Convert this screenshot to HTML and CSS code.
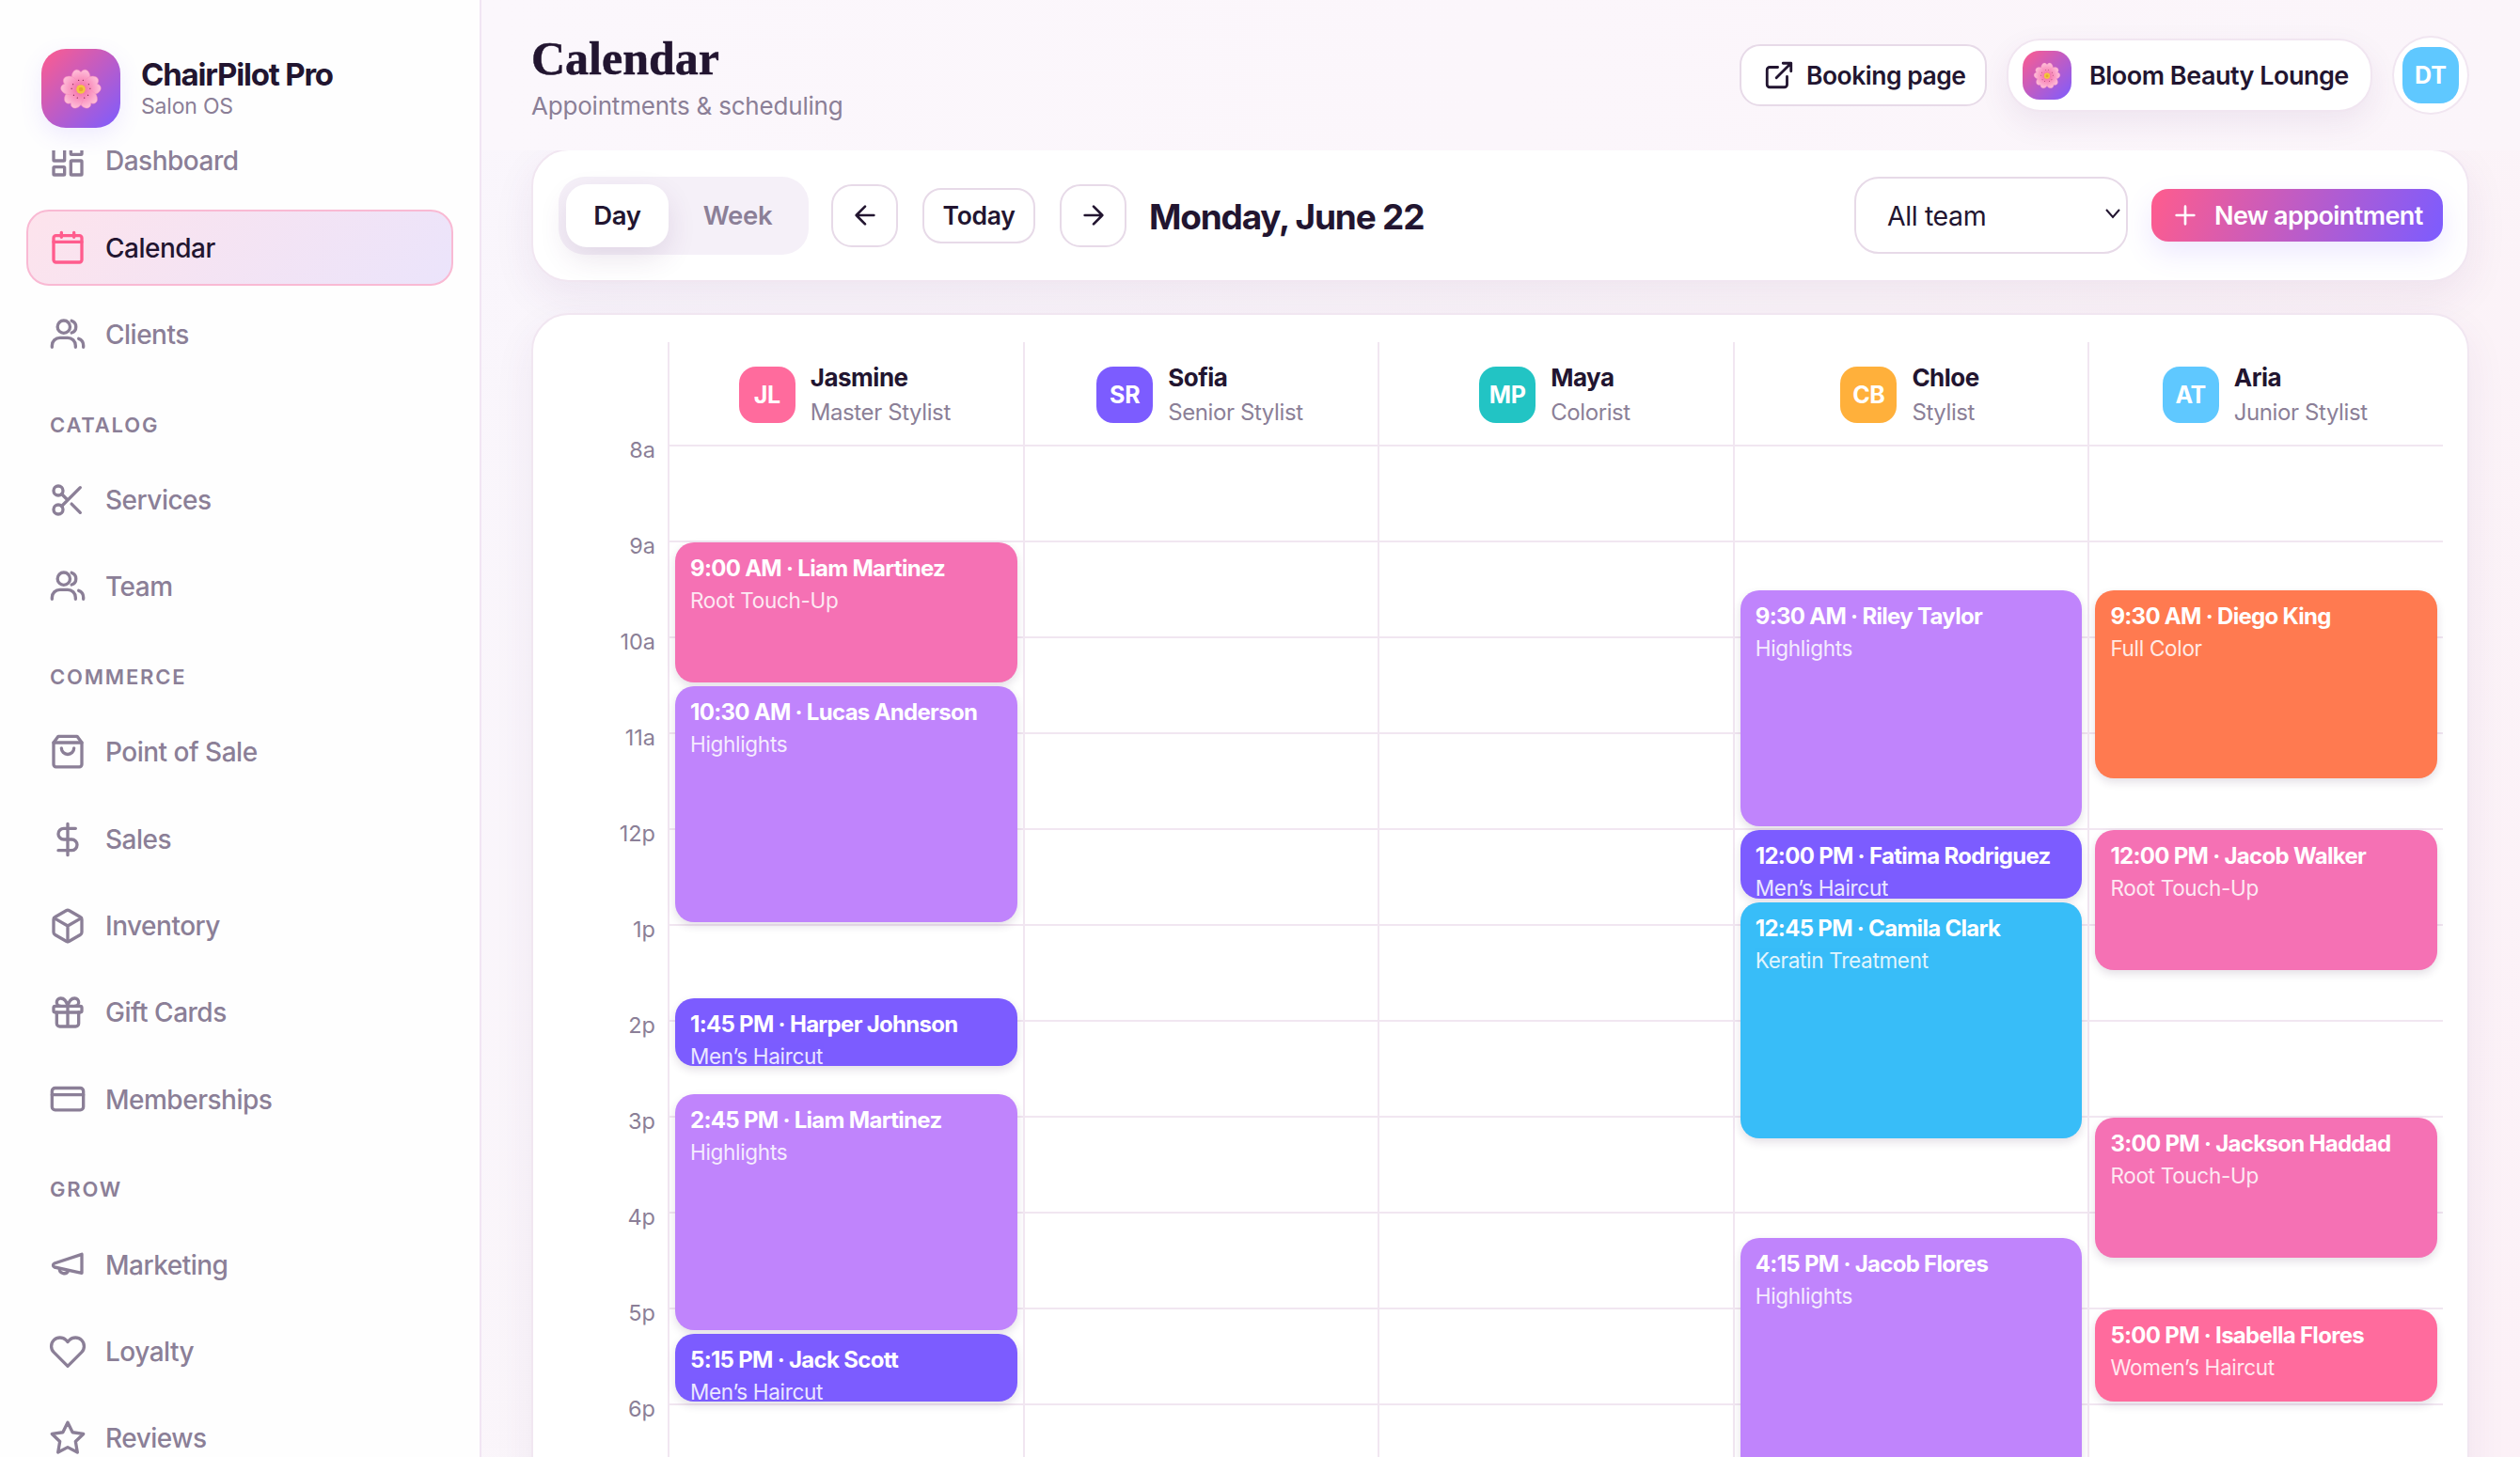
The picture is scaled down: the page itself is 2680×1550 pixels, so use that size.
FILE: index.html

```html
<!DOCTYPE html>
<html lang="en">
<head>
  <meta charset="UTF-8">
  <title>ChairPilot Pro - Calendar</title>
  <link rel="stylesheet" href="styles.css">
</head>
<body>
  <svg class="defs" width="0" height="0">
    <defs>
      <radialGradient id="petal-fill" gradientUnits="userSpaceOnUse" cx="24" cy="25" r="23">
        <stop offset="0" stop-color="#f2619e"/>
        <stop offset="0.45" stop-color="#f98fbd"/>
        <stop offset="1" stop-color="#ffc4dc"/>
      </radialGradient>
      <path id="petal" d="M24 25C15 20 11 11 16 5c2-2.400 6-2.400 8 1 2-3.400 6-3.400 8-1 5 6 1 15-8 20Z"/>
      <g id="petal-dots">
        <circle cx="21.500" cy="15" r="0.700"/>
        <circle cx="26.500" cy="15" r="0.700"/>
      </g>
    </defs>
    <symbol id="flower" viewBox="0 0 48 48">
      <g fill="url(#petal-fill)" stroke="#f88dbb" stroke-width="0.500">
        <use href="#petal"/>
        <use href="#petal" transform="rotate(72 24 25)"/>
        <use href="#petal" transform="rotate(144 24 25)"/>
        <use href="#petal" transform="rotate(216 24 25)"/>
        <use href="#petal" transform="rotate(288 24 25)"/>
      </g>
      <g fill="#8f2f55">
        <use href="#petal-dots"/>
        <use href="#petal-dots" transform="rotate(72 24 25)"/>
        <use href="#petal-dots" transform="rotate(144 24 25)"/>
        <use href="#petal-dots" transform="rotate(216 24 25)"/>
        <use href="#petal-dots" transform="rotate(288 24 25)"/>
      </g>
      <circle cx="24" cy="25" r="5" fill="#f3c63f"/>
      <circle cx="24" cy="25" r="2.400" fill="#e5a92e"/>
    </symbol>
    <symbol id="ic-users" viewBox="0 0 24 24">
      <circle cx="9.500" cy="7" r="4"/>
      <path d="M14.500 3.200a4 4 0 0 1 0 7.600"/>
      <path d="M2 20v-1a5 5 0 0 1 5-5h5a5 5 0 0 1 5 5v1"/>
      <path d="M19 14.600a4.500 4.500 0 0 1 3 4.200V20"/>
    </symbol>
  </svg>

  <div class="app">
    <aside class="sidebar">
      <div class="brand">
        <div class="brand-logo"><svg class="flower"><use href="#flower"/></svg></div>
        <div class="brand-text">
          <div class="brand-name">ChairPilot Pro</div>
          <div class="brand-sub">Salon OS</div>
        </div>
      </div>

      <nav class="nav">
        <div class="nav-scroll">
          <div class="nav-group">
            <a class="nav-item">
              <svg class="icon" viewBox="0 0 24 24"><rect x="3" y="3" width="7" height="9" rx="0.500"/><rect x="14" y="3" width="7" height="5" rx="0.500"/><rect x="14" y="12" width="7" height="9" rx="0.500"/><rect x="3" y="16" width="7" height="5" rx="0.500"/></svg>
              Dashboard
            </a>
            <a class="nav-item active">
              <svg class="icon" viewBox="0 0 24 24"><rect x="3" y="4" width="18" height="17" rx="1.500"/><path d="M8 2v3M16 2v3M3 8h18"/></svg>
              Calendar
            </a>
            <a class="nav-item">
              <svg class="icon"><use href="#ic-users"/></svg>
              Clients
            </a>
          </div>

          <div class="nav-label">CATALOG</div>
          <div class="nav-group">
            <a class="nav-item">
              <svg class="icon" viewBox="0 0 24 24"><circle cx="6" cy="6" r="3"/><circle cx="6" cy="18" r="3"/><path d="M20 4 8.120 15.880M14.470 14.480 20 20M8.120 8.120 12 12"/></svg>
              Services
            </a>
            <a class="nav-item">
              <svg class="icon"><use href="#ic-users"/></svg>
              Team
            </a>
          </div>

          <div class="nav-label">COMMERCE</div>
          <div class="nav-group">
            <a class="nav-item">
              <svg class="icon" viewBox="0 0 24 24"><path d="M6 2h12l3 4v14a1.500 1.500 0 0 1-1.500 1.500h-15A1.500 1.500 0 0 1 3 20V6Z"/><path d="M3 6h18M16 9.500a4 4 0 0 1-8 0"/></svg>
              Point of Sale
            </a>
            <a class="nav-item">
              <svg class="icon" viewBox="0 0 24 24"><path d="M12 2v20M17 5H9.500a3.500 3.500 0 0 0 0 7h5a3.500 3.500 0 0 1 0 7H6"/></svg>
              Sales
            </a>
            <a class="nav-item">
              <svg class="icon" viewBox="0 0 24 24"><path d="M21 8a2 2 0 0 0-1-1.730l-7-4a2 2 0 0 0-2 0l-7 4A2 2 0 0 0 3 8v8a2 2 0 0 0 1 1.730l7 4a2 2 0 0 0 2 0l7-4A2 2 0 0 0 21 16Z"/><path d="m3.300 7 8.700 5 8.700-5M12 22V12"/></svg>
              Inventory
            </a>
            <a class="nav-item">
              <svg class="icon" viewBox="0 0 24 24"><rect x="3" y="8" width="18" height="4" rx="1"/><path d="M12 8v13M19 12v7a2 2 0 0 1-2 2H7a2 2 0 0 1-2-2v-7M7.500 8a2.500 2.500 0 0 1 0-5A4.800 8 0 0 1 12 8a4.800 8 0 0 1 4.500-5 2.500 2.500 0 0 1 0 5"/></svg>
              Gift Cards
            </a>
            <a class="nav-item">
              <svg class="icon" viewBox="0 0 24 24"><rect x="2" y="4.500" width="20" height="14" rx="2"/><path d="M2 8.800h20"/></svg>
              Memberships
            </a>
          </div>

          <div class="nav-label">GROW</div>
          <div class="nav-group">
            <a class="nav-item">
              <svg class="icon" viewBox="0 0 24 24"><path d="M21 5v12L3.500 13.200a1.300 1.300 0 0 1 0-2.400Z"/><path d="M6.800 14.200a2.900 2.900 0 0 0 5.600 1.200"/></svg>
              Marketing
            </a>
            <a class="nav-item">
              <svg class="icon" viewBox="0 0 24 24"><path d="M20.840 4.610a5.500 5.500 0 0 0-7.780 0L12 5.670l-1.060-1.060a5.500 5.500 0 0 0-7.780 7.780l1.060 1.060L12 21.230l7.780-7.780 1.060-1.060a5.500 5.500 0 0 0 0-7.780z"/></svg>
              Loyalty
            </a>
            <a class="nav-item">
              <svg class="icon" viewBox="0 0 24 24"><path d="M12 2l3.090 6.260L22 9.270l-5 4.870 1.180 6.880L12 17.770l-6.180 3.250L7 14.140 2 9.270l6.910-1.010z"/></svg>
              Reviews
            </a>
          </div>
        </div>
      </nav>
    </aside>

    <main class="main">
      <header class="topbar">
        <div>
          <h1 class="page-title">Calendar</h1>
          <div class="page-sub">Appointments &amp; scheduling</div>
        </div>
        <div class="top-actions">
          <button class="btn-booking">
            <svg class="icon-btn" viewBox="0 0 24 24"><path d="M15 3h6v6M10 14 21 3M18 13v6a2 2 0 0 1-2 2H5a2 2 0 0 1-2-2V8a2 2 0 0 1 2-2h6"/></svg>
            Booking page
          </button>
          <div class="salon-pill">
            <div class="salon-logo"><svg class="flower-sm"><use href="#flower"/></svg></div>
            Bloom Beauty Lounge
          </div>
          <div class="user-ring"><div class="user-avatar">DT</div></div>
        </div>
      </header>

      <div class="content">
        <section class="toolbar">
          <div class="seg">
            <button class="seg-btn on">Day</button>
            <button class="seg-btn">Week</button>
          </div>
          <button class="nav-btn"><svg class="icon-btn" viewBox="0 0 24 24"><path d="m12 19-7-7 7-7M19 12H5"/></svg></button>
          <button class="today-btn">Today</button>
          <button class="nav-btn"><svg class="icon-btn" viewBox="0 0 24 24"><path d="M5 12h14M12 5l7 7-7 7"/></svg></button>
          <div class="date-label">Monday, June 22</div>
          <div class="select-wrap">
            <select class="team-select">
              <option>All team</option>
            </select>
            <svg class="select-chevron" viewBox="0 0 18 12"><path d="M2 2l7 8 7-8"/></svg>
          </div>
          <button class="btn-new">
            <svg class="icon-btn" viewBox="0 0 24 24"><path d="M5 12h14M12 5v14"/></svg>
            New appointment
          </button>
        </section>

        <section class="schedule">
          <div class="sched-head">
            <div class="head-spacer"></div>
            <div class="head-col"><div class="staff-av pink">JL</div><div><div class="staff-name">Jasmine</div><div class="staff-role">Master Stylist</div></div></div>
            <div class="head-col"><div class="staff-av violet">SR</div><div><div class="staff-name">Sofia</div><div class="staff-role">Senior Stylist</div></div></div>
            <div class="head-col"><div class="staff-av teal">MP</div><div><div class="staff-name">Maya</div><div class="staff-role">Colorist</div></div></div>
            <div class="head-col"><div class="staff-av amber">CB</div><div><div class="staff-name">Chloe</div><div class="staff-role">Stylist</div></div></div>
            <div class="head-col"><div class="staff-av sky">AT</div><div><div class="staff-name">Aria</div><div class="staff-role">Junior Stylist</div></div></div>
          </div>

          <div class="sched-body">
            <div class="times">
              <div class="time">8a</div>
              <div class="time">9a</div>
              <div class="time">10a</div>
              <div class="time">11a</div>
              <div class="time">12p</div>
              <div class="time">1p</div>
              <div class="time">2p</div>
              <div class="time">3p</div>
              <div class="time">4p</div>
              <div class="time">5p</div>
              <div class="time">6p</div>
              <div class="time">7p</div>
            </div>

            <div class="day-col">
              <div class="appt c-rose" style="--start:1;--hours:1.5"><div class="appt-title">9:00 AM · Liam Martinez</div><div class="appt-sub">Root Touch-Up</div></div>
              <div class="appt c-purple" style="--start:2.5;--hours:2.5"><div class="appt-title">10:30 AM · Lucas Anderson</div><div class="appt-sub">Highlights</div></div>
              <div class="appt c-violet" style="--start:5.75;--hours:0.75"><div class="appt-title">1:45 PM · Harper Johnson</div><div class="appt-sub">Men’s Haircut</div></div>
              <div class="appt c-purple" style="--start:6.75;--hours:2.5"><div class="appt-title">2:45 PM · Liam Martinez</div><div class="appt-sub">Highlights</div></div>
              <div class="appt c-violet" style="--start:9.25;--hours:0.75"><div class="appt-title">5:15 PM · Jack Scott</div><div class="appt-sub">Men’s Haircut</div></div>
            </div>
            <div class="day-col"></div>
            <div class="day-col"></div>
            <div class="day-col">
              <div class="appt c-purple" style="--start:1.5;--hours:2.5"><div class="appt-title">9:30 AM · Riley Taylor</div><div class="appt-sub">Highlights</div></div>
              <div class="appt c-violet" style="--start:4;--hours:0.75"><div class="appt-title">12:00 PM · Fatima Rodriguez</div><div class="appt-sub">Men’s Haircut</div></div>
              <div class="appt c-sky" style="--start:4.75;--hours:2.5"><div class="appt-title">12:45 PM · Camila Clark</div><div class="appt-sub">Keratin Treatment</div></div>
              <div class="appt c-purple" style="--start:8.25;--hours:2.5"><div class="appt-title">4:15 PM · Jacob Flores</div><div class="appt-sub">Highlights</div></div>
            </div>
            <div class="day-col">
              <div class="appt c-orange" style="--start:1.5;--hours:2"><div class="appt-title">9:30 AM · Diego King</div><div class="appt-sub">Full Color</div></div>
              <div class="appt c-rose" style="--start:4;--hours:1.5"><div class="appt-title">12:00 PM · Jacob Walker</div><div class="appt-sub">Root Touch-Up</div></div>
              <div class="appt c-rose" style="--start:7;--hours:1.5"><div class="appt-title">3:00 PM · Jackson Haddad</div><div class="appt-sub">Root Touch-Up</div></div>
              <div class="appt c-pink" style="--start:9;--hours:1"><div class="appt-title">5:00 PM · Isabella Flores</div><div class="appt-sub">Women’s Haircut</div></div>
            </div>
          </div>
        </section>
      </div>
    </main>
  </div>
</body>
</html>
```

FILE: styles.css

```css
* {
  box-sizing: border-box;
}

html, body {
  margin: 0;
  height: 100%;
  overflow: hidden;
}

body {
  font-family: "Inter", "Noto Sans", sans-serif;
  color: #221530;
  background: linear-gradient(120deg, #f9f6fd 0%, #fbf5f9 60%, #fcf1f7 100%);
}

button, select {
  font-family: inherit;
  color: inherit;
}

.defs {
  position: absolute;
}

.app {
  display: flex;
  height: 1550px;
}

/* sidebar */
.sidebar {
  width: 512px;
  flex: none;
  display: flex;
  flex-direction: column;
  background: #fefefe;
  border-right: 2px solid #f1e5f3;
}

.brand {
  height: 160px;
  flex: none;
  display: flex;
  align-items: center;
  gap: 22px;
  padding: 28px 0 0 44px;
}

.brand-text {
  margin-top: -3px;
}

.brand-logo {
  width: 84px;
  height: 84px;
  border-radius: 26px;
  display: flex;
  align-items: center;
  justify-content: center;
  background: linear-gradient(135deg, #ff5c8d, #7c5cff);
  box-shadow: 0 8px 24px rgba(124, 92, 255, 0.12);
}

.flower {
  width: 46px;
  height: 46px;
}

.brand-name {
  font-size: 33px;
  font-weight: 700;
  letter-spacing: -1.2px;
  line-height: 40px;
}

.brand-sub {
  font-size: 23px;
  line-height: 28px;
  color: #8b7f97;
  letter-spacing: -0.2px;
}

.nav {
  flex: 1;
  overflow: hidden;
  padding: 0 28px;
}

.nav-scroll {
  margin-top: -29px;
}

.nav-group {
  display: flex;
  flex-direction: column;
  gap: 12px;
}

.nav-item {
  height: 80.4px;
  display: flex;
  align-items: center;
  gap: 20px;
  padding: 0 22px;
  border: 2px solid transparent;
  border-radius: 24px;
  font-size: 28px;
  color: #8b7f97;
  font-weight: 500;
  letter-spacing: -0.5px;
}

.nav-item.active {
  color: #221530;
  background: linear-gradient(135deg, #fde3ec, #ebe4fb);
  border-color: #f9b9d3;
}

.nav-item.active .icon {
  stroke: #ff5c8d;
}

.icon {
  width: 40px;
  height: 40px;
  flex: none;
  fill: none;
  stroke: #8b7f97;
  stroke-width: 2;
  stroke-linecap: round;
  stroke-linejoin: round;
}

.nav-label {
  margin: 40.5px 0 25px 25px;
  font-size: 22px;
  line-height: 30px;
  font-weight: 600;
  letter-spacing: 1.8px;
  color: #8b7f97;
}

/* main */
.main {
  flex: 1;
  min-width: 0;
}

/* sticky header look: sits over the top edge of the toolbar */
.topbar {
  position: relative;
  z-index: 1;
  height: 160px;
  display: flex;
  align-items: flex-start;
  justify-content: space-between;
  padding: 0 54px 0 53px;
  background: linear-gradient(to right, #fbf7fc, #fbf5fa);
}

.content {
  padding: 0 54px 0 53px;
}

.page-title {
  margin: 32px 0 0;
  font-family: "Liberation Serif", serif;
  font-size: 50px;
  line-height: 60px;
  font-weight: 700;
  -webkit-text-stroke: 0.5px #221530;
}

.page-sub {
  margin-top: 6px;
  font-size: 26px;
  line-height: 30px;
  color: #8b7f97;
  letter-spacing: -0.2px;
}

.top-actions {
  display: flex;
  align-items: center;
  gap: 21px;
  margin-top: 38px;
}

.icon-btn {
  width: 36px;
  height: 36px;
  flex: none;
  fill: none;
  stroke: currentColor;
  stroke-width: 2;
  stroke-linecap: round;
  stroke-linejoin: round;
}

.btn-booking {
  width: 263px;
  height: 66px;
  display: flex;
  align-items: center;
  gap: 12px;
  padding: 0 0 0 23px;
  background: #fff;
  border: 2px solid #e7dae8;
  border-radius: 22px;
  font-size: 26.5px;
  font-weight: 600;
  letter-spacing: -0.5px;
}

.btn-booking .icon-btn {
  width: 34px;
  height: 34px;
}

.salon-pill {
  width: 389px;
  height: 78px;
  display: flex;
  align-items: center;
  gap: 19px;
  padding-left: 15px;
  background: #fff;
  border: 2px solid #f1e6f1;
  border-radius: 36px;
  box-shadow: 0 12px 32px rgba(90, 40, 110, 0.08);
  font-size: 27px;
  font-weight: 600;
  letter-spacing: -0.5px;
}

.salon-logo {
  width: 52px;
  height: 52px;
  border-radius: 18px;
  display: flex;
  align-items: center;
  justify-content: center;
  background: linear-gradient(135deg, #ff5c8d, #7c5cff);
}

.flower-sm {
  width: 30px;
  height: 30px;
}

.user-ring {
  width: 82px;
  height: 84px;
  display: flex;
  align-items: center;
  justify-content: center;
  background: #fff;
  border: 2px solid #f1e6f1;
  border-radius: 50%;
}

.user-avatar {
  width: 60px;
  height: 60px;
  border-radius: 20px;
  display: flex;
  align-items: center;
  justify-content: center;
  background: #5fc8ff;
  color: #fff;
  font-size: 25px;
  font-weight: 700;
}

/* toolbar */
.toolbar {
  height: 142px;
  margin-top: -2px;
  display: flex;
  align-items: center;
  gap: 26px;
  padding: 0 26px 0 27px;
  background: #fff;
  border: 2px solid #f1e6f1;
  border-radius: 40px;
  box-shadow: 0 16px 44px rgba(90, 40, 110, 0.08);
}

.seg {
  width: 266px;
  height: 83px;
  display: flex;
  align-items: center;
  padding: 0 8px;
  margin-right: -2px;
  background: #f5f0f8;
  border-radius: 28px;
}

.seg-btn {
  height: 67px;
  border: 0;
  background: none;
  font-size: 27.5px;
  font-weight: 600;
  letter-spacing: -0.3px;
  color: #8b7f97;
  border-radius: 22px;
}

.seg-btn.on {
  width: 109px;
  flex: none;
  background: #fff;
  color: #221530;
  box-shadow: 0 12px 30px rgba(90, 40, 110, 0.12);
}

.seg-btn:not(.on) {
  flex: 1;
  padding: 0 0 0 6px;
}

.nav-btn {
  width: 71px;
  height: 67px;
  display: flex;
  align-items: center;
  justify-content: center;
  padding: 0;
  background: #fff;
  border: 2px solid #e7dae8;
  border-radius: 22px;
}

.nav-btn .icon-btn {
  width: 32px;
  height: 32px;
}

.today-btn {
  width: 120px;
  height: 59px;
  padding: 0;
  background: #fff;
  border: 2px solid #e7dae8;
  border-radius: 20px;
  font-size: 26.5px;
  font-weight: 600;
  letter-spacing: -0.3px;
}

.date-label {
  margin-left: -2px;
  padding-top: 2px;
  font-size: 37px;
  font-weight: 700;
  letter-spacing: -1.2px;
}

.select-wrap {
  position: relative;
  margin-left: auto;
}

.team-select {
  display: block;
  width: 291px;
  height: 82px;
  padding: 0 24px 0 33px;
  appearance: none;
  background: #fff;
  border: 2px solid #e7dae8;
  border-radius: 26px;
  font-size: 28.5px;
  letter-spacing: -0.4px;
}

.select-chevron {
  position: absolute;
  right: 7px;
  top: 33px;
  width: 18px;
  height: 12px;
  fill: none;
  stroke: #221530;
  stroke-width: 2;
  pointer-events: none;
}

.btn-new {
  width: 310px;
  height: 56px;
  margin-left: -1px;
  display: flex;
  align-items: center;
  gap: 15px;
  padding: 0 0 0 20px;
  border: 0;
  border-radius: 18px;
  background: linear-gradient(110deg, #ff5c8d, #7c5cff);
  box-shadow: 0 12px 30px rgba(124, 92, 255, 0.14);
  color: #fff;
  font-size: 27px;
  font-weight: 600;
  letter-spacing: -0.6px;
}

.btn-new .icon-btn {
  width: 32px;
  height: 32px;
}

/* schedule */
.schedule {
  margin-top: 33px;
  height: 1400px;
  padding: 29px 26px 0 27px;
  background: #fff;
  border: 2px solid #f1e6f1;
  border-radius: 40px;
  box-shadow: 0 16px 44px rgba(90, 40, 110, 0.07);
}

.sched-head,
.sched-body {
  display: grid;
  grid-template-columns: 116px repeat(5, 1fr);
}

.sched-head {
  height: 109px;
}

.head-col {
  display: flex;
  align-items: center;
  justify-content: center;
  gap: 16px;
  padding: 2px 3px 0 0;
  border-left: 2px solid #f1e6f1;
}

.staff-av {
  width: 60px;
  height: 60px;
  border-radius: 18px;
  display: flex;
  align-items: center;
  justify-content: center;
  color: #fff;
  font-size: 25px;
  font-weight: 700;
  letter-spacing: -0.3px;
}

.pink { background: #ff6b9d; }
.violet { background: #7c5cff; }
.teal { background: #22c4c4; }
.amber { background: #ffb03b; }
.sky { background: #5fc8ff; }

.staff-name {
  font-size: 26px;
  line-height: 38px;
  font-weight: 700;
  letter-spacing: -0.5px;
}

.staff-role {
  font-size: 24px;
  line-height: 36px;
  color: #8b7f97;
  letter-spacing: -0.4px;
}

.sched-body {
  height: 1260px;
}

.times {
  margin-top: -9px;
  padding-right: 13px;
  text-align: right;
}

.time {
  height: 102px;
  font-size: 23.5px;
  line-height: 30px;
  color: #8b7f97;
}

.day-col {
  position: relative;
  border-left: 2px solid #f1e6f1;
  background: repeating-linear-gradient(to bottom, #f1e6f1 0, #f1e6f1 2px, transparent 2px, transparent 102px);
}

.appt {
  position: absolute;
  left: 6px;
  right: 6px;
  top: calc(var(--start) * 102px + 2px);
  height: calc(var(--hours) * 102px - 4px);
  padding: 11px 16px;
  overflow: hidden;
  border-radius: 20px;
  color: #fff;
  box-shadow: 0 4px 10px rgba(60, 30, 70, 0.14);
}

.appt-title {
  font-size: 24px;
  line-height: 34px;
  font-weight: 700;
  letter-spacing: -0.7px;
  white-space: nowrap;
}

.appt-sub {
  font-size: 22.5px;
  line-height: 33px;
  opacity: 0.85;
  letter-spacing: -0.3px;
  white-space: nowrap;
}

.c-rose { background: #f571b4; }
.c-purple { background: #c084fc; }
.c-violet { background: #7c5cff; }
.c-sky { background: #38bdf8; }
.c-orange { background: #ff7a50; }
.c-pink { background: #ff6b9d; }
```
